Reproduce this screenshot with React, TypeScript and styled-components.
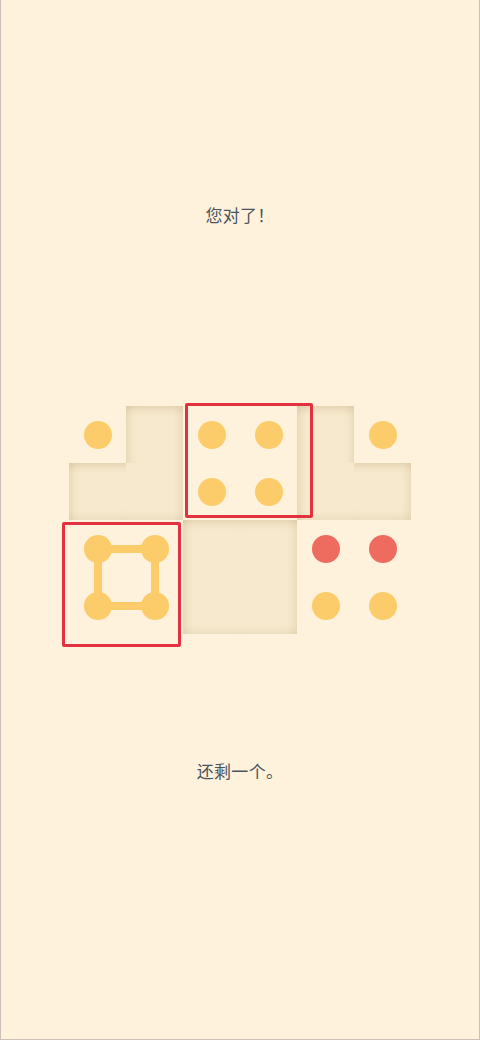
import styled, { createGlobalStyle } from "styled-components";

const GlobalStyle = createGlobalStyle`
  html, body {
    margin: 0;
    padding: 0;
    background: #fef2dc;
  }
  * {
    box-sizing: border-box;
  }
`;

const CELL = 57;

const Screen = styled.div`
  width: 480px;
  height: 1040px;
  background: #fef2dc;
  border-left: 1px solid #c9c1b5;
  border-right: 1px solid #c9c1b5;
  border-bottom: 1px solid #c9c1b5;
  display: flex;
  flex-direction: column;
  align-items: center;
  padding-top: 203px;
  font-family: "Noto Sans CJK SC", "Noto Sans", sans-serif;
`;

const Message = styled.div<{ $gap?: number }>`
  font-size: 17px;
  line-height: 24px;
  color: #4b545d;
  margin-top: ${(p) => p.$gap ?? 0}px;
  letter-spacing: 0.3px;
`;

const Board = styled.div`
  position: relative;
  margin-top: 179px;
  display: grid;
  grid-template-columns: repeat(6, ${CELL}px);
  grid-template-rows: repeat(4, ${CELL}px);
`;

interface Edges {
  top: boolean;
  left: boolean;
  right: boolean;
  bottom: boolean;
}

// spread equals blur so each shadow stays on its own edge and cells join without seams
const shadowFor = (e: Edges) => {
  const parts: string[] = [];
  if (e.top) parts.push("inset 0 11px 9px -9px rgba(150, 118, 60, 0.24)");
  if (e.left) parts.push("inset 11px 0 9px -9px rgba(150, 118, 60, 0.2)");
  if (e.right) parts.push("inset -10px 0 8px -8px rgba(150, 118, 60, 0.16)");
  if (e.bottom) parts.push("inset 0 -10px 8px -8px rgba(150, 118, 60, 0.12)");
  return parts.length ? parts.join(", ") : "none";
};

const Hole = styled.div<{ $edges: Edges }>`
  background: #f6e9cd;
  box-shadow: ${(p) => shadowFor(p.$edges)};
`;

const Tile = styled.div`
  display: flex;
  align-items: center;
  justify-content: center;
`;

const Dot = styled.div<{ $red?: boolean }>`
  position: relative;
  z-index: 2;
  width: 28px;
  height: 28px;
  border-radius: 50%;
  background: ${(p) => (p.$red ? "#ed6c5f" : "#fdcc6a")};
`;

const Frame = styled.div<{ $x: number; $y: number; $w: number; $h: number }>`
  position: absolute;
  left: ${(p) => p.$x}px;
  top: ${(p) => p.$y}px;
  width: ${(p) => p.$w}px;
  height: ${(p) => p.$h}px;
  border: 3.5px solid #e3323f;
  border-radius: 2px;
  z-index: 3;
  pointer-events: none;
`;

const Link = styled.div`
  position: absolute;
  left: ${CELL / 2 - 4}px;
  top: ${CELL * 2 + CELL / 2 - 4}px;
  width: ${CELL + 8}px;
  height: ${CELL + 8}px;
  border: 8px solid #fdcc6a;
  z-index: 1;
`;

// D = yellow dot, R = red dot, H = empty slot
const layout = ["DHDDHD", "HHDDHH", "DDHHRR", "DDHHDD"];

const isHole = (r: number, c: number) =>
  r >= 0 && r < layout.length && c >= 0 && c < 6 && layout[r][c] === "H";

const App = () => {
  return (
    <>
      <GlobalStyle />
      <Screen>
        <Message>您对了！</Message>
        <Board>
          {layout.map((row, r) =>
            row.split("").map((kind, c) => {
              if (kind === "H") {
                return (
                  <Hole
                    key={`${r}-${c}`}
                    $edges={{
                      top: !isHole(r - 1, c),
                      left: !isHole(r, c - 1),
                      right: !isHole(r, c + 1),
                      bottom: !isHole(r + 1, c),
                    }}
                  />
                );
              }
              return (
                <Tile key={`${r}-${c}`}>
                  <Dot $red={kind === "R"} />
                </Tile>
              );
            })
          )}
          <Link />
          <Frame $x={116} $y={-3} $w={128} $h={115} />
          <Frame $x={-7} $y={116} $w={119} $h={125} />
        </Board>
        <Message $gap={125}>还剩一个。</Message>
      </Screen>
    </>
  );
};

export default App;
